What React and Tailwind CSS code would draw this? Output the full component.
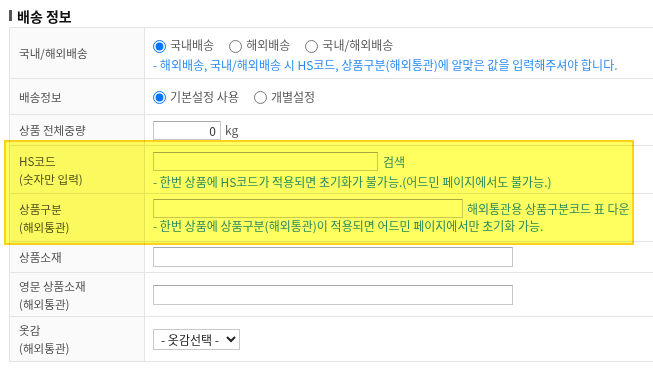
import React from "react";

const font = { fontFamily: '"Noto Sans CJK KR", "Noto Sans", sans-serif' };

function Row({ h, label, children, className = "" }) {
  return (
    <div className={`flex border-b border-[#e3e3e8] ${h}`}>
      <div className="w-[135px] shrink-0 bg-[#fafafa] border-r border-[#e3e3e8] flex flex-col justify-center pl-[9px] text-[11.6px] leading-[18px] text-[#505050]">
        {label}
      </div>
      <div className={`flex-1 pl-[8px] ${className}`}>{children}</div>
    </div>
  );
}

function Radio({ checked, label, name }) {
  return (
    <label className="flex items-center mr-[15px]">
      <input
        type="radio"
        name={name}
        defaultChecked={checked}
        className="w-[13px] h-[13px] m-0 mr-[4px] mt-[2px]"
      />
      <span>{label}</span>
    </label>
  );
}

const inputCls =
  "block h-[19px] border border-[#c8c8c8] border-t-[#a8a8a8] bg-white";

export default function App() {
  return (
    <div className="relative w-[653px] h-[371px] overflow-hidden bg-white" style={font}>
      <div className="flex items-center h-[27px] pl-[9px] pt-[4px]">
        <div className="w-[3px] h-[11px] bg-[#555] mr-[5px]" />
        <div className="text-[14px] font-bold text-[#111] leading-[20px]">배송 정보</div>
      </div>
      <div className="ml-[9px] border-l border-t border-[#e3e3e8] text-[12px] text-[#5a5a5a]">
        <Row h="h-[51px]" label="국내/해외배송" className="pt-[7px]">
          <div className="flex items-center h-[20px] leading-[20px]">
            <Radio name="a" checked label="국내배송" />
            <Radio name="a" label="해외배송" />
            <Radio name="a" label="국내/해외배송" />
          </div>
          <div className="h-[20px] leading-[20px] text-[#2a8bf2]">
            - 해외배송, 국내/해외배송 시 HS코드, 상품구분(해외통관)에 알맞은 값을 입력해주셔야 합니다.
          </div>
        </Row>
        <Row h="h-[36px]" label="배송정보" className="flex items-center">
          <Radio name="b" checked label="기본설정 사용" />
          <Radio name="b" label="개별설정" />
        </Row>
        <Row h="h-[31px]" label="상품 전체중량" className="flex items-center">
          <input
            defaultValue="0"
            className={`${inputCls} w-[68px] text-right pr-[4px] text-[12px] text-[#333]`}
          />
          <span className="ml-[4px]">kg</span>
        </Row>
        <Row
          h="h-[48px]"
          label={
            <>
              <div>HS코드</div>
              <div>(숫자만 입력)</div>
            </>
          }
          className="pt-[6px]"
        >
          <div className="flex items-center">
            <input className={`${inputCls} w-[225px]`} />
            <span className="ml-[5px] text-[#2a8bf2]">검색</span>
          </div>
          <div className="mt-[3px] leading-[16px] text-[#2a8bf2]">
            - 한번 상품에 HS코드가 적용되면 초기화가 불가능.(어드민 페이지에서도 불가능.)
          </div>
        </Row>
        <Row
          h="h-[48px]"
          label={
            <>
              <div>상품구분</div>
              <div>(해외통관)</div>
            </>
          }
          className="pt-[5px]"
        >
          <div className="flex items-center">
            <input className={`${inputCls} w-[310px]`} />
            <span className="ml-[4px] text-[#2a8bf2]">해외통관용 상품구분코드 표 다운</span>
          </div>
          <div className="leading-[16px] text-[#2a8bf2]">
            - 한번 상품에 상품구분(해외통관)이 적용되면 어드민 페이지에서만 초기화 가능.
          </div>
        </Row>
        <Row h="h-[31px]" label="상품소재" className="flex items-center">
          <input className={`${inputCls} w-[360px] h-[20px]`} />
        </Row>
        <Row
          h="h-[44px]"
          label={
            <>
              <div>영문 상품소재</div>
              <div>(해외통관)</div>
            </>
          }
          className="flex items-center"
        >
          <input className={`${inputCls} w-[360px] h-[20px]`} />
        </Row>
        <Row
          h="h-[45px]"
          label={
            <>
              <div>옷감</div>
              <div>(해외통관)</div>
            </>
          }
          className="flex items-center"
        >
          <select className="h-[21px] w-[87px] border border-[#c8c8c8] bg-white text-[12px] text-[#222] pl-[3px]">
            <option>- 옷감선택 -</option>
          </select>
        </Row>
      </div>
      <div className="absolute left-[4px] top-[140px] w-[630px] h-[105px] bg-[#ffff60] mix-blend-multiply border-2 border-[#ffd21a] pointer-events-none" />
    </div>
  );
}
